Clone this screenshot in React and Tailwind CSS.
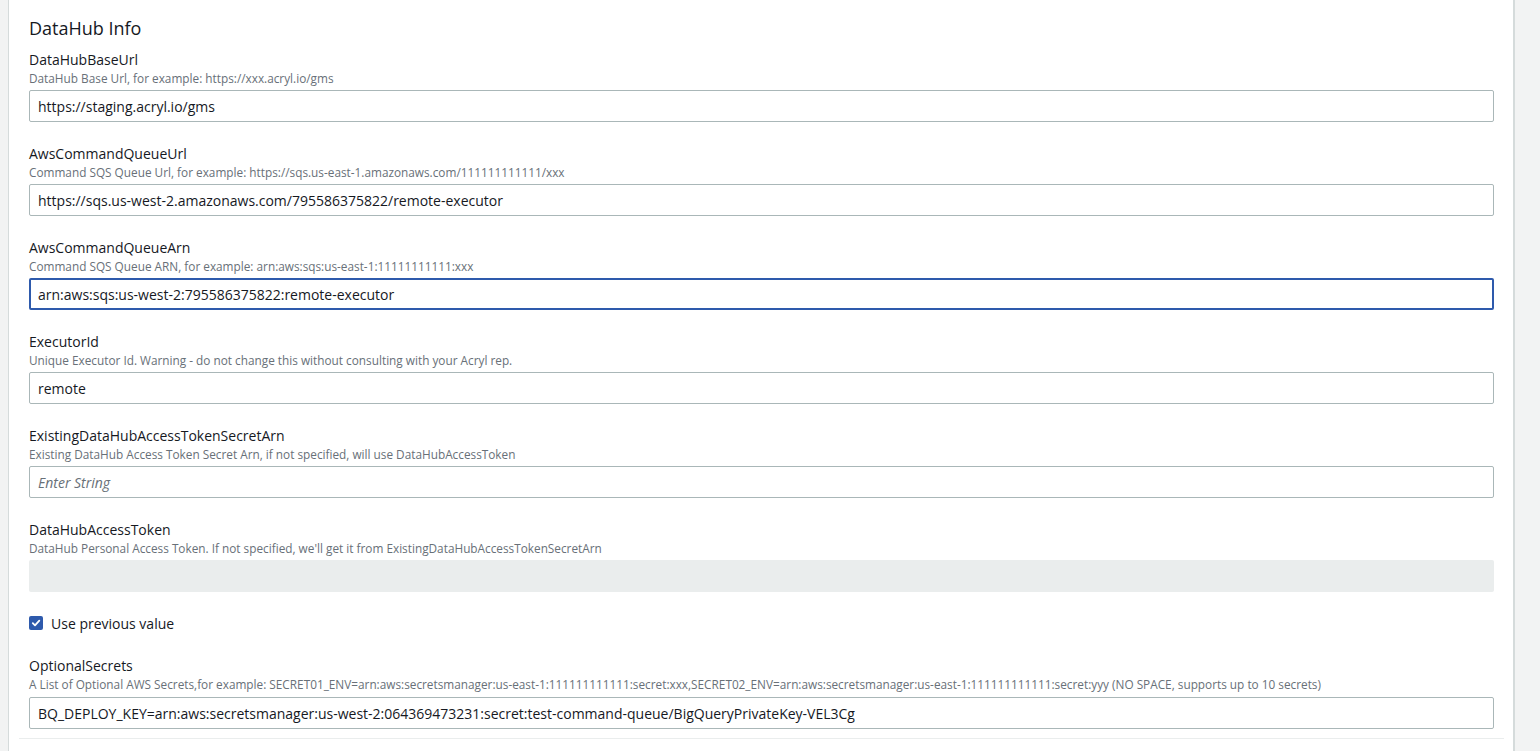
import React from "react";

const fields = [
  { label: "DataHubBaseUrl", desc: "DataHub Base Url, for example: https://xxx.acryl.io/gms", value: "https://staging.acryl.io/gms" },
  { label: "AwsCommandQueueUrl", desc: "Command SQS Queue Url, for example: https://sqs.us-east-1.amazonaws.com/111111111111/xxx", value: "https://sqs.us-west-2.amazonaws.com/795586375822/remote-executor" },
  { label: "AwsCommandQueueArn", desc: "Command SQS Queue ARN, for example: arn:aws:sqs:us-east-1:11111111111:xxx", value: "arn:aws:sqs:us-west-2:795586375822:remote-executor", focus: true },
  { label: "ExecutorId", desc: "Unique Executor Id. Warning - do not change this without consulting with your Acryl rep.", value: "remote" },
  { label: "ExistingDataHubAccessTokenSecretArn", desc: "Existing DataHub Access Token Secret Arn, if not specified, will use DataHubAccessToken", placeholder: "Enter String" },
];

function Field({ label, desc, value, placeholder, focus }) {
  return (
    <div className="flex flex-col mb-[22px]">
      <div className="text-[14px] leading-[20px] text-[#16191f]">{label}</div>
      <div className="text-[11.8px] leading-[16px] text-[#687078]">{desc}</div>
      <div
        className={
          "mt-[4px] h-[32px] flex items-center px-[8px] rounded-[2px] bg-white text-[14px] " +
          (focus ? "border-2 border-[#2e5aac] pl-[7px]" : "border border-[#aab7b8]")
        }
      >
        {value ? (
          <span className="text-[#16191f]">{value}</span>
        ) : (
          <span className="italic text-[#687078]">{placeholder}</span>
        )}
      </div>
    </div>
  );
}

export default function App() {
  return (
    <div
      className="w-[1540px] h-[751px] overflow-hidden flex bg-[#f2f3f3]"
      style={{ fontFamily: '"Open Sans", "Liberation Sans", sans-serif' }}
    >
      <div className="w-[9px] bg-[#f2f3f3] border-r border-[#d5dbdb]" />
      <div className="w-[1506px] bg-white border-r-2 border-[#d5dbdb] flex flex-col pl-[20px] pr-[19px]">
        <h2 className="text-[18px] leading-[24px] text-[#16191f] mt-[16px] mb-[10px]">DataHub Info</h2>
        {fields.map((f) => (
          <Field key={f.label} {...f} />
        ))}
        <div className="flex flex-col">
          <div className="text-[14px] leading-[20px] text-[#16191f]">DataHubAccessToken</div>
          <div className="text-[11.8px] leading-[16px] text-[#687078]">
            DataHub Personal Access Token. If not specified, we'll get it from ExistingDataHubAccessTokenSecretArn
          </div>
          <div className="mt-[4px] h-[32px] rounded-[2px] bg-[#eaeded]" />
        </div>
        <div className="flex items-center gap-[8px] mt-[22px] mb-[24px] h-[18px]">
          <div className="w-[14px] h-[14px] rounded-[2px] bg-[#2e5aac] flex items-center justify-center">
            <svg width="10" height="10" viewBox="0 0 10 10">
              <path d="M1.8 5.2 L4 7.4 L8.3 2.6" fill="none" stroke="white" strokeWidth="1.8" strokeLinecap="round" strokeLinejoin="round" />
            </svg>
          </div>
          <span className="text-[14px] text-[#16191f]">Use previous value</span>
        </div>
        <div className="flex flex-col">
          <div className="text-[14px] leading-[20px] text-[#16191f]">OptionalSecrets</div>
          <div className="text-[11.8px] leading-[16px] text-[#687078]">
            A List of Optional AWS Secrets,for example: SECRET01_ENV=arn:aws:secretsmanager:us-east-1:111111111111:secret:xxx,SECRET02_ENV=arn:aws:secretsmanager:us-east-1:111111111111:secret:yyy (NO SPACE, supports up to 10 secrets)
          </div>
          <div className="mt-[5px] h-[32px] flex items-center px-[8px] rounded-[2px] border border-[#aab7b8] text-[14px] text-[#16191f]">
            BQ_DEPLOY_KEY=arn:aws:secretsmanager:us-west-2:064369473231:secret:test-command-queue/BigQueryPrivateKey-VEL3Cg
          </div>
        </div>
        <div className="mt-[9px] -mx-[10px] border-t border-[#eaeded]" />
      </div>
    </div>
  );
}
